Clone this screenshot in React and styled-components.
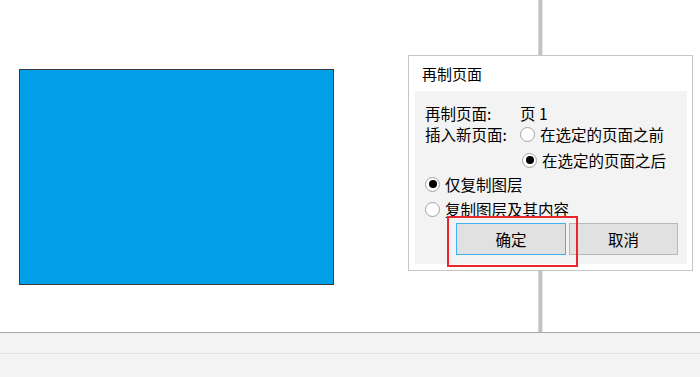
import React from 'react';
import styled, { createGlobalStyle } from 'styled-components';

const GlobalStyle = createGlobalStyle`
  html, body {
    margin: 0;
    padding: 0;
    background: #ffffff;
  }
  body {
    font-family: "Noto Sans CJK SC", "Noto Sans", sans-serif;
    color: #000;
  }
`;

const App = () => {
    return (
        <Page>
            <GlobalStyle />
            <Canvas>
                <Shape />
                <PageDivider />
                <Dialog>
                    <DialogTitle>再制页面</DialogTitle>
                    <DialogBody>
                        <Row>
                            <Label>再制页面:</Label>
                            <Value>页 1</Value>
                        </Row>
                        <Row $gap={1}>
                            <Label>插入新页面:</Label>
                            <Radio label="在选定的页面之前" />
                        </Row>
                        <Row $gap={6} $indent={97}>
                            <Radio label="在选定的页面之后" checked />
                        </Row>
                        <Row $gap={4}>
                            <Radio label="仅复制图层" checked />
                        </Row>
                        <Row $gap={5}>
                            <Radio label="复制图层及其内容" />
                        </Row>
                        <ButtonRow>
                            <Button $primary>确定</Button>
                            <Button>取消</Button>
                            <Highlight />
                        </ButtonRow>
                    </DialogBody>
                </Dialog>
            </Canvas>
            <StatusBar />
            <StatusBar $last />
        </Page>
    );
};

const Radio = ({ label, checked }) => (
    <RadioWrap>
        <RadioCircle $checked={checked} />
        <span>{label}</span>
    </RadioWrap>
);

const Page = styled.div`
    width: 700px;
    height: 377px;
    display: flex;
    flex-direction: column;
    overflow: hidden;
`;

const Canvas = styled.div`
    position: relative;
    height: 332px;
    background: #ffffff;
    border-bottom: 1px solid #a8a8a8;
`;

const Shape = styled.div`
    position: absolute;
    left: 19px;
    top: 69px;
    width: 313px;
    height: 214px;
    background: #009fe8;
    border: 1px solid #3a3a3a;
`;

const PageDivider = styled.div`
    position: absolute;
    left: 538px;
    top: 0;
    width: 3px;
    height: 332px;
    background: #c2c2c2;
    border-left: 1px solid #d4d4d4;
    border-right: 1px solid #e6e6e6;
`;

const Dialog = styled.div`
    position: absolute;
    left: 408px;
    top: 55px;
    width: 283px;
    height: 214px;
    background: #ffffff;
    border: 1px solid #c6c6c6;
    display: flex;
    flex-direction: column;
`;

const DialogTitle = styled.div`
    height: 35px;
    line-height: 35px;
    padding-left: 13px;
    font-size: 15px;
`;

const DialogBody = styled.div`
    flex: 1;
    margin: 0 5px 6px 6px;
    background: #f3f3f3;
    padding: 12px 0 0 10px;
    display: flex;
    flex-direction: column;
    font-size: 15.5px;
`;

const Row = styled.div`
    display: flex;
    align-items: center;
    height: 20px;
    margin-top: ${p => p.$gap || 0}px;
    padding-left: ${p => p.$indent || 0}px;
`;

const Label = styled.span`
    width: 95px;
    white-space: nowrap;
`;

const Value = styled.span``;

const RadioWrap = styled.label`
    display: flex;
    align-items: center;
    gap: 5px;
    white-space: nowrap;
    line-height: 20px;
`;

const RadioCircle = styled.span`
    width: 13px;
    height: 13px;
    border-radius: 50%;
    border: 1px solid #a2a2a2;
    background: #ffffff;
    display: flex;
    align-items: center;
    justify-content: center;

    &::after {
        content: "";
        display: ${p => (p.$checked ? 'block' : 'none')};
        width: 8px;
        height: 8px;
        border-radius: 50%;
        background: #000;
    }
`;

const ButtonRow = styled.div`
    position: relative;
    display: flex;
    gap: 3px;
    margin-top: 4px;
    padding-left: 31px;
`;

const Button = styled.div`
    width: ${p => (p.$primary ? '108px' : '107px')};
    height: 30px;
    background: #e1e1e1;
    border: 1px solid ${p => (p.$primary ? '#3fb2f2' : '#b8b8b8')};
    display: flex;
    align-items: center;
    justify-content: center;
    font-size: 15.5px;
`;

const Highlight = styled.div`
    position: absolute;
    left: 22px;
    top: -7px;
    width: 127px;
    height: 47px;
    border: 2px solid #e8262b;
    pointer-events: none;
`;

const StatusBar = styled.div`
    height: ${p => (p.$last ? '23px' : '20px')};
    background: #f3f3f3;
    border-bottom: ${p => (p.$last ? 'none' : '1px solid #e0e0e0')};
`;

export default App;
